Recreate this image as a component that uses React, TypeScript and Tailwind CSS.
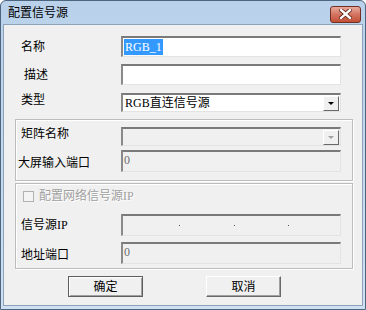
import React from "react";

const FONT = { fontFamily: '"Liberation Serif", "Noto Sans CJK SC", serif' };

function Sunken({ children, disabled }: { children?: React.ReactNode; disabled?: boolean }) {
  return (
    <div
      className={`relative w-[220px] shrink-0 h-full border-t-2 border-l-2 border-t-[#7a7a7a] border-l-[#8a8a8a] border-b border-r border-b-[#e3e3e3] border-r-[#e3e3e3] ${
        disabled ? "bg-[#f0f0f0]" : "bg-white"
      }`}
    >
      {children}
    </div>
  );
}

function DropBtn({ disabled }: { disabled?: boolean }) {
  return (
    <div className="absolute right-[1px] top-[1px] w-[16px] h-[15px] bg-[#f0f0f0] border-t border-l border-t-white border-l-white border-b border-r border-b-[#696969] border-r-[#696969] flex items-center justify-center">
      <div
        className={`w-0 h-0 border-l-[3px] border-r-[3px] border-t-[3px] border-l-transparent border-r-transparent ${
          disabled ? "border-t-[#a0a0a0]" : "border-t-black"
        }`}
      />
    </div>
  );
}

function Label({ children, inGroup, className = "" }: { children: React.ReactNode; inGroup?: boolean; className?: string }) {
  return (
    <div className={`${inGroup ? "w-[105px]" : "w-[117px]"} shrink-0 text-[12px] leading-[14px] text-black ${className}`}>
      {children}
    </div>
  );
}

export default function App() {
  return (
    <div className="w-[366px] h-[310px] bg-white" style={FONT}>
      <div className="w-[366px] h-[310px] rounded-t-[6px] border border-[#4d6680] bg-gradient-to-b from-[#b9d1ea] to-[#cfe0f2] flex flex-col px-[2px] pb-[3px]">
        {/* title bar */}
        <div className="h-[23px] flex items-center justify-between shrink-0">
          <span className="ml-[5px] mt-[1px] text-[12px] leading-[14px] text-black">配置信号源</span>
          <div className="mr-[2px] mt-[3px] w-[31px] h-[17px] rounded-[3px] border border-[#6f2f25] bg-gradient-to-b from-[#e8a99c] via-[#d37462] to-[#c24f33] flex items-center justify-center">
            <svg width="13" height="10" viewBox="0 0 13 10">
              <path d="M2 1 L11 9 M11 1 L2 9" stroke="#5a1d12" strokeWidth="4" strokeLinecap="square" />
              <path d="M2 1 L11 9 M11 1 L2 9" stroke="#ffffff" strokeWidth="2.4" strokeLinecap="square" />
            </svg>
          </div>
        </div>

        {/* client */}
        <div className="flex-1 border border-[#8da2b9] bg-[#f0f0f0] flex flex-col">
          {/* name */}
          <div className="flex items-center h-[21px] mt-[11px]">
            <Label className="pl-[17px]">名称</Label>
            <Sunken>
              <span className="absolute left-[1px] top-[1px] h-[16px] px-[1px] bg-[#3399ff] text-white text-[12px] leading-[16px]">RGB_1</span>
            </Sunken>
          </div>
          {/* desc */}
          <div className="flex items-center h-[21px] mt-[7px]">
            <Label className="pl-[20px]">描述</Label>
            <Sunken />
          </div>
          {/* type */}
          <div className="flex items-start h-[19px] mt-[8px]">
            <Label className="pl-[17px]">类型</Label>
            <Sunken>
              <span className="absolute left-[2px] top-[1px] text-[12px] leading-[15px] text-black">RGB直连信号源</span>
              <DropBtn />
            </Sunken>
          </div>

          {/* group 1 */}
          <div className="ml-[11px] mt-[7px] w-[338px] h-[62px] border border-[#bdbdbd] shadow-[inset_1px_1px_0_#ffffff,1px_1px_0_#ffffff] flex flex-col">
            <div className="flex items-start h-[19px] mt-[7px]">
              <Label inGroup className="pl-[5px]">矩阵名称</Label>
              <Sunken disabled>
                <DropBtn disabled />
              </Sunken>
            </div>
            <div className="flex items-center h-[22px] mt-[4px]">
              <Label inGroup className="pl-[2px] mt-[4px]">大屏输入端口</Label>
              <Sunken disabled>
                <span className="absolute left-[1px] top-[1px] text-[12px] leading-[14px] text-[#6d6d6d]">0</span>
              </Sunken>
            </div>
          </div>

          {/* group 2 */}
          <div className="ml-[11px] mt-[2px] w-[338px] h-[86px] border border-[#bdbdbd] shadow-[inset_1px_1px_0_#ffffff,1px_1px_0_#ffffff] flex flex-col">
            <div className="flex items-center h-[14px] mt-[5px] pl-[7px]">
              <div className="w-[11px] h-[11px] border border-[#b1b1b1] bg-[#f4f4f4]" />
              <span className="ml-[5px] text-[12px] leading-[14px] text-[#a0a0a0] [text-shadow:1px_1px_0_#ffffff]">配置网络信号源IP</span>
            </div>
            <div className="flex items-center h-[22px] mt-[11px]">
              <Label inGroup className="pl-[5px]">信号源IP</Label>
              <Sunken disabled>
                <span className="absolute left-[56px] top-[9px] w-px h-px bg-[#555]" />
                <span className="absolute left-[111px] top-[9px] w-px h-px bg-[#555]" />
                <span className="absolute left-[165px] top-[9px] w-px h-px bg-[#555]" />
              </Sunken>
            </div>
            <div className="flex items-center h-[22px] mt-[6px]">
              <Label inGroup className="pl-[5px] mt-[4px]">地址端口</Label>
              <Sunken disabled>
                <span className="absolute left-[1px] top-[1px] text-[12px] leading-[14px] text-[#6d6d6d]">0</span>
              </Sunken>
            </div>
          </div>

          {/* buttons */}
          <div className="flex mt-[7px] pl-[64px] gap-[63px]">
            <button className="w-[75px] h-[21px] bg-[#f0f0f0] border border-[#5e5e5e] shadow-[inset_1px_1px_0_#ffffff,inset_-1px_-1px_0_#a0a0a0] text-[12px] leading-[14px] text-black" style={FONT}>
              确定
            </button>
            <button className="w-[75px] h-[21px] bg-[#f0f0f0] border-t border-l border-t-white border-l-white border-b border-r border-b-[#696969] border-r-[#696969] shadow-[inset_-1px_-1px_0_#a0a0a0] text-[12px] leading-[14px] text-black" style={FONT}>
              取消
            </button>
          </div>
        </div>
      </div>
    </div>
  );
}
